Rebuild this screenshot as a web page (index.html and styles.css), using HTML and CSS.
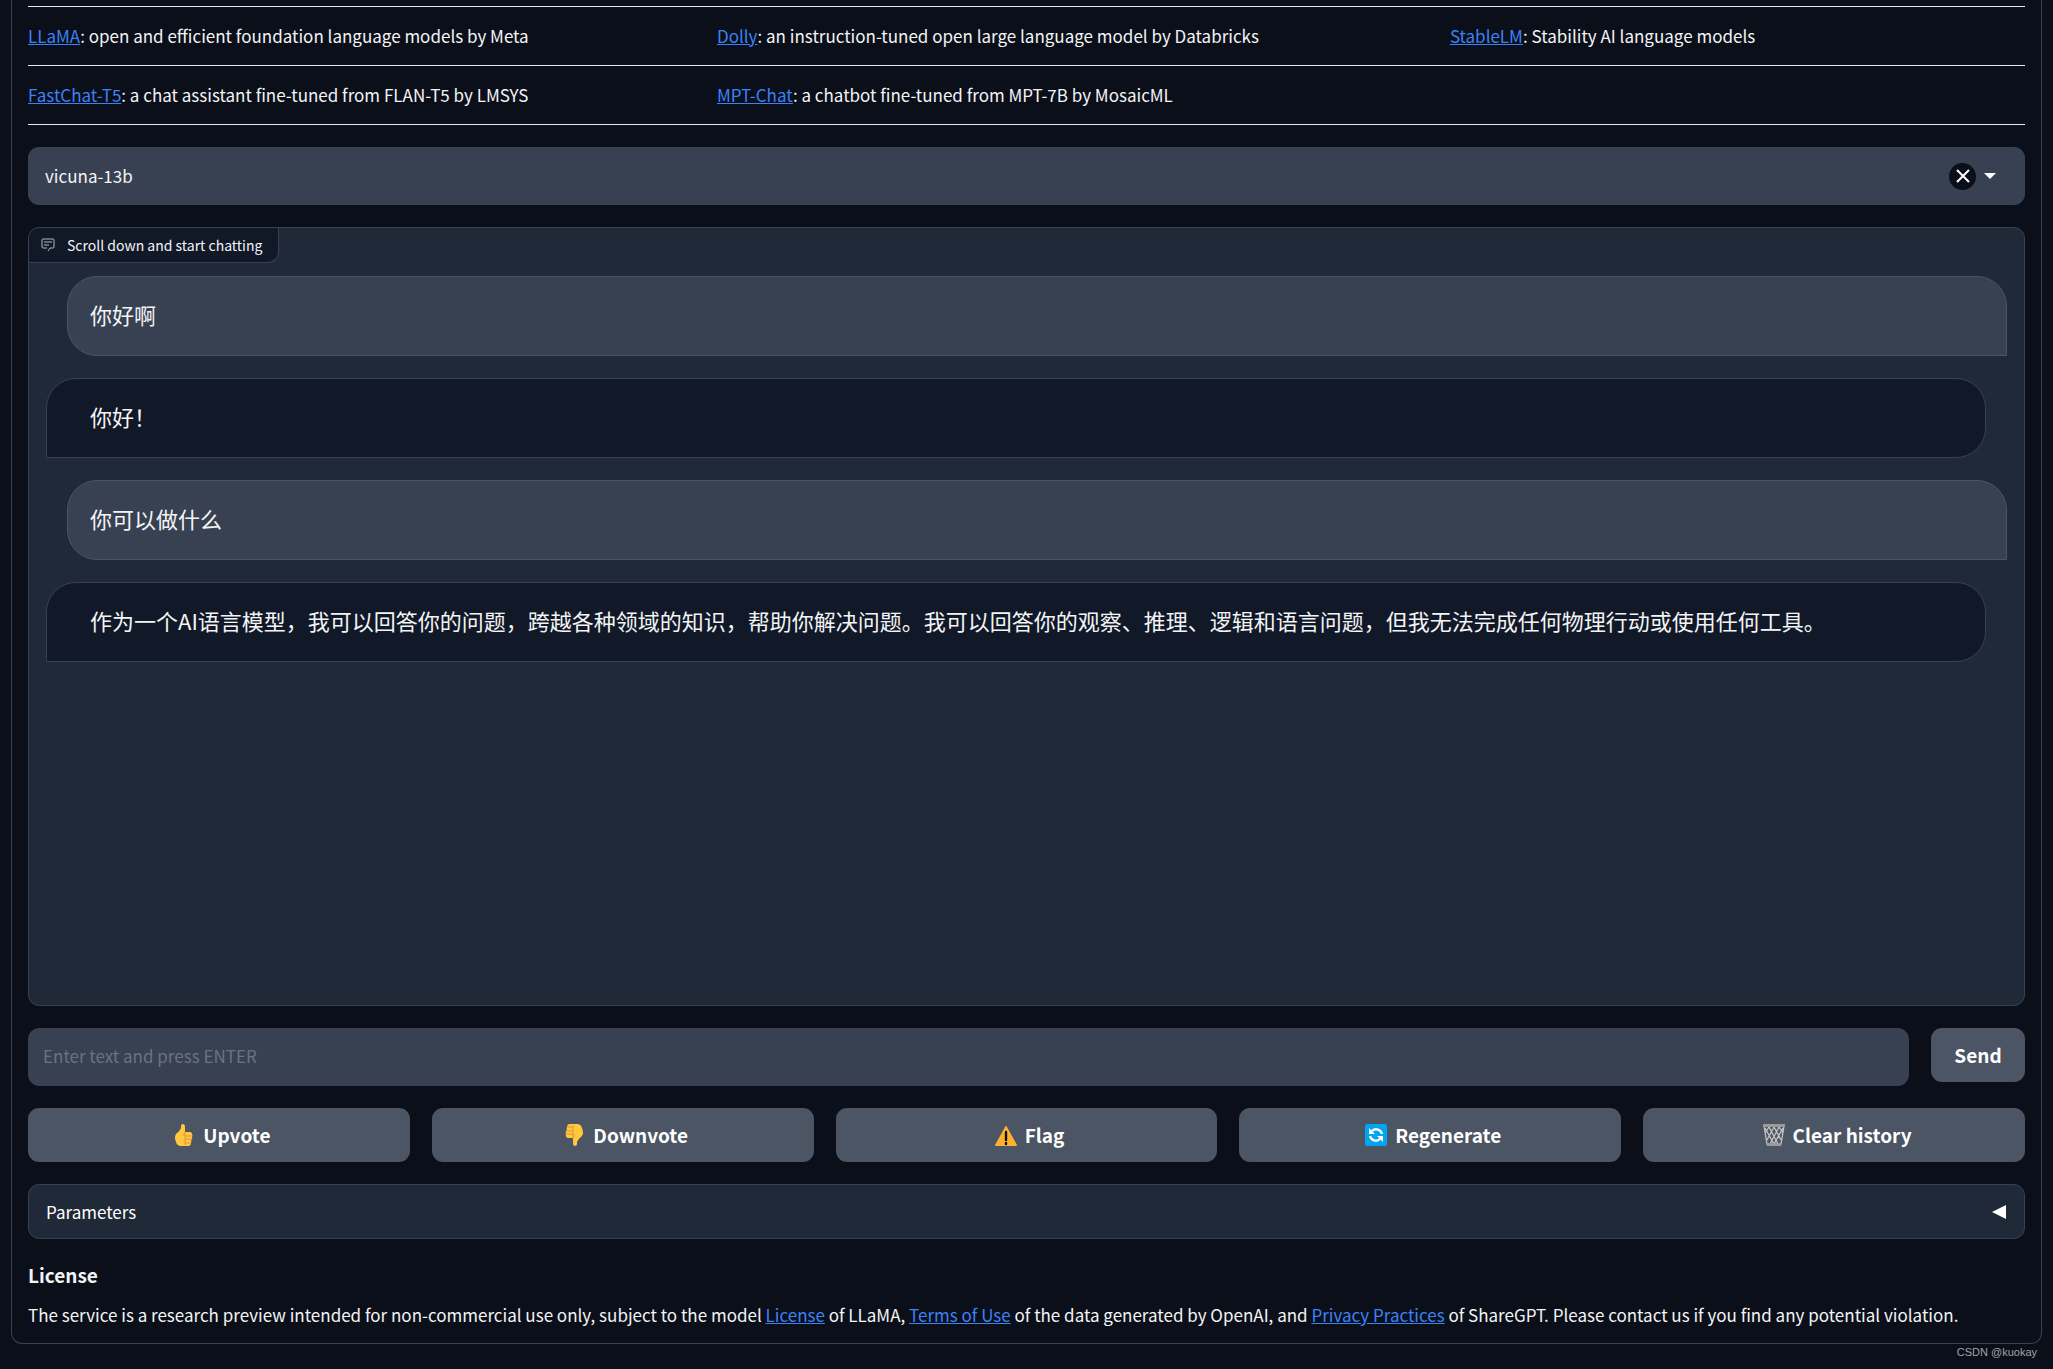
FILE: index.html
```html
<!DOCTYPE html>
<html lang="en">
<head>
    <meta charset="UTF-8">
    <meta name="viewport" content="width=device-width, initial-scale=1.0">
    <title>Chat with Open Large Language Models</title>
    <link rel="stylesheet" href="styles.css">
</head>
<body>

    <main class="container">
        <table class="models">
            <tbody>
                <tr>
                    <td><a href="#">LLaMA</a>: open and efficient foundation language models by Meta</td>
                    <td><a href="#">Dolly</a>: an instruction-tuned open large language model by Databricks</td>
                    <td><a href="#">StableLM</a>: Stability AI language models</td>
                </tr>
                <tr>
                    <td><a href="#">FastChat-T5</a>: a chat assistant fine-tuned from FLAN-T5 by LMSYS</td>
                    <td><a href="#">MPT-Chat</a>: a chatbot fine-tuned from MPT-7B by MosaicML</td>
                    <td></td>
                </tr>
            </tbody>
        </table>

        <div class="dropdown">
            <input type="text" class="dropdown-value" value="vicuna-13b" aria-label="Model">
            <button class="clear-model" aria-label="Clear model">
                <svg width="14" height="14" viewBox="0 0 14 14"><path d="M1 1L13 13M13 1L1 13" stroke="#fff" stroke-width="2"/></svg>
            </button>
            <svg class="caret" width="12" height="6" viewBox="0 0 12 6"><path d="M0 0H12L6 6Z" fill="#fff"/></svg>
        </div>

        <section class="chatbot">
            <div class="chat-label">
                <svg width="14" height="14" viewBox="0 0 14 14" fill="none" stroke="#b4b9c2"><path d="M7 13L9 10H12Q13 10 13 9V2Q13 1 12 1H2Q1 1 1 2V9Q1 10 2 10H6M3 4H11M3 7H8"/></svg>
                <span>Scroll down and start chatting</span>
            </div>
            <div class="messages" lang="zh-CN">
                <div class="message user">你好啊</div>
                <div class="message bot">你好！</div>
                <div class="message user">你可以做什么</div>
                <div class="message bot">作为一个AI语言模型，我可以回答你的问题，跨越各种领域的知识，帮助你解决问题。我可以回答你的观察、推理、逻辑和语言问题，但我无法完成任何物理行动或使用任何工具。</div>
            </div>
        </section>

        <form class="input-row">
            <input type="text" class="textbox" placeholder="Enter text and press ENTER" aria-label="Message">
            <button type="button" class="btn send">Send</button>
        </form>

        <div class="button-row">
            <button class="btn">
                <svg width="22" height="22" viewBox="0 0 22 22"><path d="M3 10Q7 7 8 4V2Q8 0 10 0Q12 0 12 3V8H17Q19 8 19 10Q20 12 19 13Q20 15 18 16Q19 18 18 19Q18 22 15 22H8Q4 22 3 18Q1 13 3 10Z" fill="#ffc83d"/><path d="M12 8Q10 10 11 12M12 12H19M12 15H19M12 19H18M12 9V21" fill="none" stroke="#e19747"/></svg>
                Upvote
            </button>
            <button class="btn">
                <svg width="22" height="22" viewBox="0 0 22 22"><path d="M19 12Q15 15 14 18V20Q14 22 12 22Q10 22 10 19V14H5Q3 14 3 12Q2 10 3 9Q2 7 4 6Q3 4 4 3Q4 0 7 0H14Q18 0 19 4Q21 9 19 12Z" fill="#ffc83d"/><path d="M10 14Q12 12 11 10M3 10H10M3 7H10M4 3H10M10 1V13" fill="none" stroke="#e19747"/></svg>
                Downvote
            </button>
            <button class="btn">
                <svg width="22" height="22" viewBox="0 0 22 22"><path d="M10 3Q11 1 12 3L22 21Q22 22 21 22H1Q0 22 0 21Z" fill="#ffb02e"/><path d="M11 8V16M11 19V20" stroke="#111" stroke-width="2.4" stroke-linecap="round"/></svg>
                Flag
            </button>
            <button class="btn">
                <svg width="22" height="22" viewBox="0 0 22 22"><rect width="22" height="22" rx="2" fill="#00a6ed"/><path d="M17 10A6 6 0 0 0 7 7M5 12A6 6 0 0 0 15 15" fill="none" stroke="#fff" stroke-width="2.4"/><path d="M4 4V10H10ZM18 18V12H12Z" fill="#fff"/></svg>
                Regenerate
            </button>
            <button class="btn">
                <svg width="22" height="22" viewBox="0 0 22 22"><path d="M1 2L4 20H18L21 2M2 4L11 20M6 3L15 20M11 3L18 16M16 3L20 9M20 4L11 20M16 3L7 20M11 3L4 16M6 3L2 9" fill="none" stroke="#c4c4c4" stroke-width="1.3"/><path d="M0 0H22V3H0ZM3 19H19L18 22H4Z" fill="#9b9b9b"/></svg>
                Clear history
            </button>
        </div>

        <button class="accordion">
            <span>Parameters</span>
            <svg width="14" height="14" viewBox="0 0 14 14"><path d="M14 0V14L0 7Z" fill="#fff"/></svg>
        </button>

        <section class="license">
            <h3>License</h3>
            <p>The service is a research preview intended for non-commercial use only, subject to the model <a href="#">License</a> of LLaMA, <a href="#">Terms of Use</a> of the data generated by OpenAI, and <a href="#">Privacy Practices</a> of ShareGPT. Please contact us if you find any potential violation.</p>
        </section>
    </main>

    <footer class="watermark">CSDN @kuokay</footer>

</body>
</html>
```
FILE: styles.css
```css
* {
    box-sizing: border-box;
}

body {
    margin: 0;
    background-color: #0b0f19;
    color: #f3f4f6;
    font-family: "Noto Sans CJK SC", "Noto Sans", sans-serif;
    font-size: 17px;
    line-height: 28px;
}

button, input {
    font: inherit;
    color: inherit;
}

a {
    color: #3b82f6;
    text-decoration: underline;
}

.container {
    display: flex;
    flex-direction: column;
    gap: 22px;
    margin: 0 11px;
    padding: 6px 16px 14px;
    border: 1px solid #374151;
    border-top: none;
    border-radius: 0 0 11px 11px;
}

.models {
    width: 100%;
    border-collapse: collapse;
    border-top: 1px solid #e5e7eb;
}

.models td {
    height: 59px;
    padding: 0;
    border-bottom: 1px solid #e5e7eb;
}

.models td:first-child {
    width: 34.5%;
}

.models td:last-child {
    width: 28.8%;
}

.dropdown {
    display: flex;
    align-items: center;
    height: 58px;
    padding: 0 29px 0 17px;
    background-color: #374151;
    border-radius: 11px;
}

.dropdown-value {
    flex: 1;
    padding: 0;
    border: none;
    background: none;
    outline: none;
}

.clear-model {
    display: flex;
    align-items: center;
    justify-content: center;
    width: 27px;
    height: 27px;
    margin-right: 8px;
    padding: 0;
    border: none;
    border-radius: 50%;
    background-color: #0b0f19;
    cursor: pointer;
}

.chatbot {
    height: 779px;
    background-color: #1f2937;
    border: 1px solid #374151;
    border-radius: 11px;
    overflow: hidden;
}

.chat-label {
    display: inline-flex;
    align-items: center;
    gap: 12px;
    height: 35px;
    padding: 0 16px 0 12px;
    background-color: #111827;
    border-right: 1px solid #374151;
    border-bottom: 1px solid #374151;
    border-radius: 0 0 11px 0;
    font-size: 14px;
    vertical-align: top;
}

.messages {
    display: flex;
    flex-direction: column;
    gap: 22px;
    padding: 13px 17px;
}

.message {
    min-height: 80px;
    padding: 22px;
    border: 1px solid #374151;
    border-radius: 30px;
    font-size: 22px;
    line-height: 30px;
}

.user {
    margin-left: 21px;
    background-color: #374151;
    border-color: #4b5563;
    border-bottom-right-radius: 0;
}

.bot {
    margin-right: 21px;
    padding-left: 43px;
    background-color: #111827;
    border-bottom-left-radius: 0;
}

.input-row {
    display: flex;
    align-items: flex-start;
    gap: 22px;
}

.textbox {
    flex: 1;
    height: 58px;
    padding: 0 14px 4px;
    background-color: #374151;
    border: 1px solid #374151;
    border-radius: 11px;
}

.textbox::placeholder {
    color: #6b7280;
}

.button-row {
    display: grid;
    grid-template-columns: repeat(5, 1fr);
    gap: 22px;
}

.btn {
    display: flex;
    align-items: center;
    justify-content: center;
    gap: 8px;
    height: 54px;
    border: none;
    border-radius: 11px;
    background-color: #4b5563;
    color: #fff;
    font-size: 19px;
    font-weight: 600;
    cursor: pointer;
}

.btn:hover {
    background-color: #374151;
}

.button-row .btn {
    padding: 0 6px 0 12px;
}

.send {
    width: 94px;
}

.accordion {
    display: flex;
    align-items: center;
    justify-content: space-between;
    height: 55px;
    padding: 0 18px 0 17px;
    background-color: #1f2937;
    border: 1px solid #374151;
    border-radius: 11px;
    color: #fff;
    cursor: pointer;
}

.license h3 {
    margin: 0 0 12px;
    font-size: 19px;
    font-weight: 600;
}

.license p {
    margin: 0;
}

.watermark {
    padding-right: 16px;
    color: #a0a3a8;
    font-family: "Liberation Sans", sans-serif;
    font-size: 11px;
    line-height: 16px;
    text-align: right;
}
```
